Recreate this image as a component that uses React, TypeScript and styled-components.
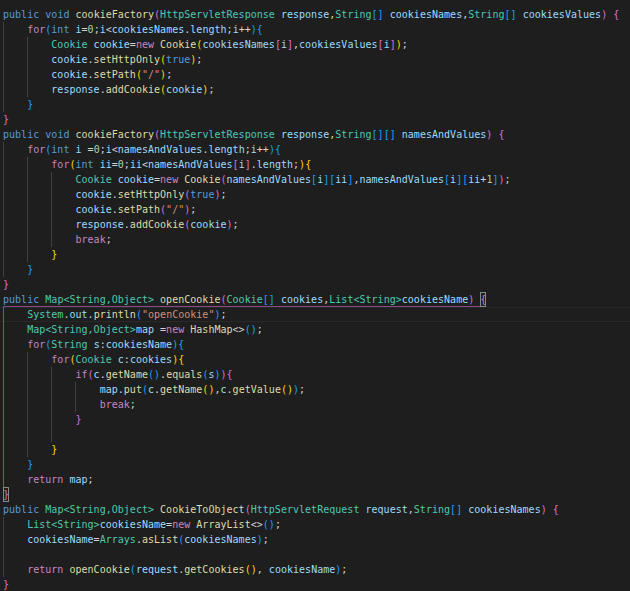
import React from "react";
import styled, { createGlobalStyle } from "styled-components";

// Dark+ editor colours
const C = {
  bg: "#1e1e1e",
  text: "#d4d4d4",
  kw: "#569cd6",
  ctrl: "#c586c0",
  type: "#4ec9b0",
  fn: "#dcdcaa",
  vari: "#9cdcfe",
  num: "#b5cea8",
  str: "#ce9178",
  guide: "#404040",
  guideActive: "#8b4a8a",
  lineBorder: "#282828",
};
const bracketColors = ["#ffd700", "#da70d6", "#179fff"];

const CHAR = 6.04;
const INDENT = CHAR * 4;

const GlobalStyle = createGlobalStyle`
  html, body {
    margin: 0;
    background: ${C.bg};
  }
`;

const Editor = styled.div`
  width: 630px;
  height: 591px;
  overflow: hidden;
  box-sizing: border-box;
  padding-top: 7px;
  background: ${C.bg};
  font-family: "DejaVu Sans Mono", "Liberation Mono", monospace;
  font-size: 10px;
  letter-spacing: 0.02px;
  line-height: 15px;
  color: ${C.text};
`;

const Row = styled.div<{ $current?: boolean }>`
  display: flex;
  height: 15px;
  padding-left: 3px;
  white-space: pre;
  box-shadow: ${(p) =>
    p.$current ? `inset 0 1px 0 ${C.lineBorder}, inset 0 -1px 0 ${C.lineBorder}` : "none"};
`;

const Guide = styled.span<{ $active?: boolean }>`
  flex: none;
  width: ${INDENT}px;
  height: 15px;
  box-shadow: inset 1px 0 0 ${(p) => (p.$active ? C.guideActive : C.guide)};
`;

const Code = styled.span<{ $pair?: boolean }>`
  display: inline-block;
  height: 15px;
  box-shadow: ${(p) => (p.$pair ? `inset 0 -1px 0 ${C.guideActive}` : "none")};
`;

const Tok = styled.span<{ $c: string }>`
  color: ${(p) => p.$c};
`;

const BracketBox = styled.span<{ $c: string }>`
  display: inline-block;
  height: 15px;
  color: ${(p) => p.$c};
  background: rgba(0, 100, 0, 0.1);
  outline: 1px solid #888888;
  outline-offset: -1px;
`;

type Token = { t: string; c: string; br?: boolean };
type LineSpec = {
  src: string;
  guides?: number;
  active?: boolean;
  current?: boolean;
  pair?: boolean;
  box?: boolean;
};

const KW = new Set(["public", "void", "int", "true"]);
const CTRL = new Set(["for", "if", "return", "break", "new"]);

function tokenize(src: string, state: { depth: number }): Token[] {
  const out: Token[] = [];
  let i = 0;
  let prevWord = "";
  const push = (t: string, c: string, br = false) => {
    const last = out[out.length - 1];
    if (!br && last && !last.br && last.c === c) last.t += t;
    else out.push({ t, c, br });
  };
  while (i < src.length) {
    const ch = src[i];
    if (/[A-Za-z_]/.test(ch)) {
      let j = i;
      while (j < src.length && /\w/.test(src[j])) j++;
      let w = src.slice(i, j);
      let color: string;
      if (KW.has(w)) color = C.kw;
      else if (CTRL.has(w)) color = C.ctrl;
      else if (src[j] === "(") color = C.fn;
      else if (/^[A-Z]/.test(w)) {
        if (prevWord === "new") color = C.fn;
        else if (src[j] === "<") {
          j = src.indexOf(">", j) + 1;
          w = src.slice(i, j);
          color = C.type;
        } else color = C.type;
      } else color = C.vari;
      push(w, color);
      prevWord = w;
      i = j;
    } else if (/[0-9]/.test(ch)) {
      let j = i;
      while (j < src.length && /[0-9]/.test(src[j])) j++;
      push(src.slice(i, j), C.num);
      i = j;
    } else if (ch === '"') {
      const j = src.indexOf('"', i + 1) + 1;
      push(src.slice(i, j), C.str);
      i = j;
    } else if ("([{".includes(ch)) {
      push(ch, bracketColors[state.depth % 3], true);
      state.depth++;
      i++;
    } else if (")]}".includes(ch)) {
      state.depth--;
      push(ch, bracketColors[state.depth % 3], true);
      i++;
    } else {
      if (ch !== " ") prevWord = prevWord === "new" && ch !== " " ? "" : prevWord;
      push(ch, C.text);
      i++;
    }
  }
  return out;
}

const lines: LineSpec[] = [
  { src: "public void cookieFactory(HttpServletResponse response,String[] cookiesNames,String[] cookiesValues) {" },
  { src: "    for(int i=0;i<cookiesNames.length;i++){" },
  { src: "        Cookie cookie=new Cookie(cookiesNames[i],cookiesValues[i]);" },
  { src: "        cookie.setHttpOnly(true);" },
  { src: '        cookie.setPath("/");' },
  { src: "        response.addCookie(cookie);" },
  { src: "    }" },
  { src: "}" },
  { src: "public void cookieFactory(HttpServletResponse response,String[][] namesAndValues) {" },
  { src: "    for(int i =0;i<namesAndValues.length;i++){" },
  { src: "        for(int ii=0;ii<namesAndValues[i].length;){" },
  { src: "            Cookie cookie=new Cookie(namesAndValues[i][ii],namesAndValues[i][ii+1]);" },
  { src: "            cookie.setHttpOnly(true);" },
  { src: '            cookie.setPath("/");' },
  { src: "            response.addCookie(cookie);" },
  { src: "            break;" },
  { src: "        }" },
  { src: "    }" },
  { src: "}" },
  { src: "public Map<String,Object> openCookie(Cookie[] cookies,List<String>cookiesName) {", pair: true, box: true },
  { src: '    System.out.println("openCookie");', active: true, current: true },
  { src: "    Map<String,Object>map =new HashMap<>();", active: true },
  { src: "    for(String s:cookiesName){", active: true },
  { src: "        for(Cookie c:cookies){", active: true },
  { src: "            if(c.getName().equals(s)){", active: true },
  { src: "                map.put(c.getName(),c.getValue());", active: true },
  { src: "                break;", active: true },
  { src: "            }", active: true },
  { src: "", guides: 3, active: true },
  { src: "        }", active: true },
  { src: "    }", active: true },
  { src: "    return map;", active: true },
  { src: "}", box: true },
  { src: "public Map<String,Object> CookieToObject(HttpServletRequest request,String[] cookiesNames) {" },
  { src: "    List<String>cookiesName=new ArrayList<>();" },
  { src: "    cookiesName=Arrays.asList(cookiesNames);" },
  { src: "", guides: 1 },
  { src: "    return openCookie(request.getCookies(), cookiesName);" },
  { src: "}" },
];

function CodeLine({ spec, tokens }: { spec: LineSpec; tokens: Token[] }) {
  const lead = spec.src.length - spec.src.trimStart().length;
  const guideCount = spec.guides ?? Math.floor(lead / 4);
  const body = spec.box ? tokens.slice(0, -1) : tokens;
  const tail = spec.box ? tokens[tokens.length - 1] : null;
  return (
    <Row $current={spec.current}>
      {Array.from({ length: guideCount }, (_, g) => (
        <Guide key={g} $active={spec.active && g === 0} />
      ))}
      <Code $pair={spec.pair}>
        {body.map((tk, k) => (
          <Tok key={k} $c={tk.c}>
            {tk.t}
          </Tok>
        ))}
      </Code>
      {tail && <BracketBox $c={tail.c}>{tail.t}</BracketBox>}
    </Row>
  );
}

export default function App() {
  const state = { depth: 1 };
  const tokenized = lines.map((l) => tokenize(l.src.trimStart(), state));
  return (
    <>
      <GlobalStyle />
      <Editor>
        {lines.map((l, i) => (
          <CodeLine key={i} spec={l} tokens={tokenized[i]} />
        ))}
      </Editor>
    </>
  );
}
